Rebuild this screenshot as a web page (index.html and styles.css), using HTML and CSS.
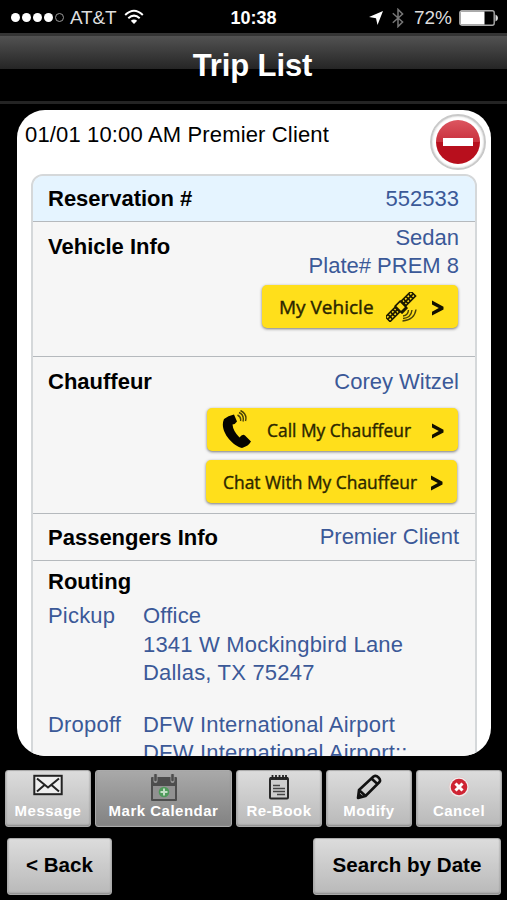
FILE: index.html
```html
<!DOCTYPE html>
<html lang="en">
	<head>
		<meta charset="UTF-8" />
		<meta name="viewport" content="width=device-width, initial-scale=1.0" />
		<title>Trip List</title>
		<link rel="stylesheet" href="styles.css">
	</head>
	<body>
		<div class="status">
			<div class="carrier">
				<span class="dot"></span><span class="dot"></span><span class="dot"></span><span class="dot"></span><span class="dot empty"></span>
				<span class="network">AT&amp;T</span>
				<svg class="wifi" width="20" height="16" viewBox="0 0 20 16">
					<path d="M1.2 6 Q10 -2.4 18.8 6" fill="none" stroke="#fff" stroke-width="2" />
					<path d="M4.3 9.3 Q10 4 15.7 9.3" fill="none" stroke="#fff" stroke-width="2" />
					<path d="M6.8 11.8 Q10 9 13.2 11.8 L10 15Z" fill="#fff" />
				</svg>
			</div>
			<div class="time">10:38</div>
			<div class="battery-info">
				<svg width="14" height="14" viewBox="0 0 14 14">
					<path d="M14 0 L8.5 14 L7 7.3 L0 6Z" fill="#fff" />
				</svg>
				<svg class="bluetooth" width="12" height="20" viewBox="0 0 12 20">
					<path d="M0.8 5.2 L10.6 14 L6 18.6 V1.4 L10.6 6 L0.8 14.8" fill="none" stroke="#777" stroke-width="1.5" />
				</svg>
				<span class="percent">72%</span>
				<svg width="39" height="16" viewBox="0 0 39 16">
					<rect x="0.8" y="0.8" width="34.4" height="14.4" rx="2" fill="none" stroke="#aaa" stroke-width="1.4" />
					<rect x="1.5" y="1.5" width="24" height="13" fill="#fff" />
					<path d="M36.500 4.500 Q39 5.500 39 8 Q39 10.500 36.500 11.500Z" fill="#ddd" />
				</svg>
			</div>
		</div>

		<h1 class="header">Trip List</h1>

		<div class="card">
			<div class="card-title">
				<span>01/01 10:00 AM Premier Client</span>
				<div class="remove"><div class="remove-disc"><div class="remove-bar"></div></div></div>
			</div>
			<div class="details">
				<div class="row reservation">
					<h2>Reservation #</h2>
					<p>552533</p>
				</div>
				<div class="row vehicle">
					<h2>Vehicle Info</h2>
					<div class="value">
						<p>Sedan</p>
						<p>Plate# PREM 8</p>
						<div class="btn btn-vehicle">
							<span>My Vehicle</span>
							<svg class="satellite" width="32" height="30" viewBox="0 0 32 30">
								<g transform="rotate(-45 14.5 14.5)" fill="none" stroke="#1b1800" stroke-width="1.6">
									<rect x="-3.500" y="11.200" width="13.500" height="6.600" />
									<path d="M0 11.500v6M3.500 11.500v6M7 11.500v6M-3 14.500h13M19 14.500h13" />
									<rect x="19" y="11.200" width="13.500" height="6.600" />
									<path d="M22 11.500v6M25.500 11.500v6M29 11.500v6" />
									<path d="M11 10.500h7v9h-7z M10 14.500h1M18 14.500h1" fill="#ffdf1b" />
									<path d="M10.500 19.500h8" stroke-width="3" />
								</g>
								<path d="M17 24 Q22 23.500 22.500 18 M17 26.500 Q25 26 26 18 M16.500 29 Q28.500 28 30 17.500" fill="none" stroke="#4a4208" stroke-width="1.400" />
							</svg>
							<svg class="chevron" width="13" height="16" viewBox="0 0 13 16"><path d="M1 0.500 L12.500 6.800 V9.400 L1 15.500 V11.700 L7.800 8.100 L1 4.500Z" /></svg>
						</div>
					</div>
				</div>
				<div class="row chauffeur">
					<h2>Chauffeur</h2>
					<div class="value">
						<p>Corey Witzel</p>
						<div class="btn btn-call">
							<svg class="phone" width="30" height="40" viewBox="0 0 30 40">
								<path d="M2 9 Q6 5.500 12 4.500 L15 11.500 Q13.500 14 10.500 14.500 Q11 21 17.500 27.500 Q20.500 23.500 23 25.500 L29 31.500 Q26.500 36 20 38 C9 35 -3 20 2 9Z" fill="#050500" />
								<path d="M15.500 5 Q19.500 7 18.500 11 M17 2.500 Q22.500 5 21 11.500 M18.500 0.500 Q25.500 4 23.500 11" fill="none" stroke="#4a4208" stroke-width="1.400" />
							</svg>
							<span class="narrow">Call My Chauffeur</span>
							<svg class="chevron" width="13" height="16" viewBox="0 0 13 16"><path d="M1 0.500 L12.500 6.800 V9.400 L1 15.500 V11.700 L7.800 8.100 L1 4.500Z" /></svg>
						</div>
						<div class="btn btn-chat">
							<span class="narrow">Chat With My Chauffeur</span>
							<svg class="chevron" width="13" height="16" viewBox="0 0 13 16"><path d="M1 0.500 L12.500 6.800 V9.400 L1 15.500 V11.700 L7.800 8.100 L1 4.500Z" /></svg>
						</div>
					</div>
				</div>
				<div class="row passengers">
					<h2>Passengers Info</h2>
					<p>Premier Client</p>
				</div>
				<div class="routing">
					<h2>Routing</h2>
					<div class="stop">
						<p>Pickup</p>
						<div>
							<p>Office</p>
							<p>1341 W Mockingbird Lane</p>
							<p>Dallas, TX 75247</p>
						</div>
					</div>
					<div class="stop">
						<p>Dropoff</p>
						<div>
							<p>DFW International Airport</p>
							<p>DFW International Airport::</p>
						</div>
					</div>
				</div>
			</div>
		</div>

		<div class="toolbar">
			<div class="tool">
				<svg width="30" height="22" viewBox="0 0 30 22">
					<rect x="1.300" y="1.800" width="27.400" height="18.400" fill="#eee" stroke="#222" stroke-width="2" />
					<path d="M4 4.500 L15 13.500 L26 4.500 M4 17.500 L11.500 11 M26 17.500 L18.500 11" fill="none" stroke="#222" stroke-width="2" />
				</svg>
				<span>Message</span>
			</div>
			<div class="tool wide">
				<svg width="28" height="28" viewBox="0 0 28 28">
					<rect x="1" y="3" width="26" height="24" rx="1" fill="#4d4d4d" />
					<rect x="3" y="12" width="22" height="13" fill="#919191" />
					<path d="M5.500 1v6M22.500 1v6" stroke="#999" stroke-width="4" stroke-linecap="round" />
					<path d="M5.500 1v5M22.500 1v5" stroke="#4d4d4d" stroke-width="2.500" stroke-linecap="round" />
					<circle cx="14" cy="18" r="5.300" fill="#4f9a5b" />
					<path d="M14 14.500v7M10.500 18h7" stroke="#c4dfc6" stroke-width="2" />
				</svg>
				<span>Mark Calendar</span>
			</div>
			<div class="tool">
				<svg width="22" height="26" viewBox="0 0 22 26">
					<rect x="2" y="4" width="18" height="20.500" rx="1" fill="#ccc" stroke="#282828" stroke-width="2" />
					<path d="M2 4.500h18" stroke="#282828" stroke-width="3" />
					<path d="M4.500 1v4M8 1v4M11.500 1v4M15 1v4M18 1v4" stroke="#222" stroke-width="1.800" />
					<path d="M5 11.500h7M5 14.500h12M5 17.500h12M9 20.500h8" stroke="#444" stroke-width="1.300" />
				</svg>
				<span>Re-Book</span>
			</div>
			<div class="tool">
				<svg width="26" height="26" viewBox="0 0 26 26">
					<path d="M3 16 L17.500 2.500 Q20 1 22.500 3.500 Q25 6 23.500 8 L9.500 22 L2 24Z M3.500 16.500 L9 21.500 M16 5 L21.500 10" fill="none" stroke="#111" stroke-width="2.600" stroke-linejoin="round" />
					<path d="M1.500 24.500 L3 18.500 L7.500 22.800Z" fill="#111" />
				</svg>
				<span>Modify</span>
			</div>
			<div class="tool">
				<svg class="cancel" width="22" height="22" viewBox="0 0 22 22">
					<circle cx="11" cy="11" r="10" fill="#eee" stroke="#ddc8c8" stroke-width="0.800" />
					<circle cx="11" cy="11" r="8.300" fill="#cf2433" />
					<path d="M7.500 7.500l7 7M14.500 7.500l-7 7" stroke="#fff" stroke-width="3" />
				</svg>
				<span>Cancel</span>
			</div>
		</div>

		<div class="bottom">
			<div class="nav-btn back">&lt; Back</div>
			<div class="nav-btn search">Search by Date</div>
		</div>
	</body>
</html>
```
FILE: styles.css
```css
* {
	box-sizing: border-box;
	margin: 0;
	padding: 0;
}

body {
	width: 507px;
	height: 900px;
	overflow: hidden;
	background: #000;
	font-family: "Liberation Sans", Arial, sans-serif;
	font-size: 22px;
	line-height: 28px;
}

svg {
	display: block;
	flex-shrink: 0;
}

h2 {
	font-size: 22px;
	line-height: 28px;
	white-space: nowrap;
}

/* status bar */
.status {
	display: grid;
	grid-template-columns: 1fr auto 1fr;
	align-items: center;
	height: 33px;
	padding: 2px 9px 0 11px;
	color: #ddd;
	font-size: 19px;
}

.carrier,
.battery-info {
	display: flex;
	align-items: center;
}

.battery-info {
	justify-content: flex-end;
}

.dot {
	width: 9px;
	height: 9px;
	margin-right: 2px;
	border-radius: 50%;
	background: #fff;
}

.dot.empty {
	background: none;
	border: 1px solid #999;
}

.network {
	margin-left: 4px;
	letter-spacing: -0.2px;
}

.wifi {
	margin: -2px 0 0 8px;
}

.time {
	margin-right: 2px;
	color: #fff;
	font-size: 18px;
	font-weight: bold;
}

.bluetooth {
	margin: 0 10px 0 9px;
}

.percent {
	margin-right: 7px;
}

/* title bar */
.header {
	height: 71px;
	padding-right: 2px;
	border-top: 3px solid #353535;
	border-bottom: 3px solid #242424;
	background: linear-gradient(#525252, #252525 33px, #000 33px);
	color: #fff;
	font-size: 31px;
	line-height: 59px;
	text-align: center;
	letter-spacing: -0.1px;
}

/* trip card */
.card {
	width: 474px;
	height: 646px;
	margin: 6px 0 0 17px;
	overflow: hidden;
	border-radius: 28px;
	background: #fff;
}

.card-title {
	display: flex;
	justify-content: space-between;
	height: 64px;
	padding: 5px 5px 0 8px;
	line-height: 39px;
	letter-spacing: 0.15px;
}

.remove {
	display: flex;
	align-items: center;
	justify-content: center;
	width: 56px;
	height: 56px;
	margin-top: -1px;
	border: 2px solid #c9c9c9;
	border-radius: 50%;
	background: #fff;
	box-shadow: inset 0 0 2px #bbb;
}

.remove-disc {
	display: flex;
	align-items: center;
	justify-content: center;
	width: 44px;
	height: 44px;
	border-radius: 50%;
	background: linear-gradient(#dc5660, #c9313d 49%, #b80f1d 50%);
}

.remove-bar {
	width: 30px;
	height: 8px;
	background: #fff;
}

.details {
	width: 446px;
	height: 620px;
	margin-left: 14px;
	overflow: hidden;
	border: 2px solid #d5d8da;
	border-radius: 12px;
	background: #f6f6f6;
	color: #3b5998;
}

.details h2 {
	color: #000;
}

.row {
	display: flex;
	justify-content: space-between;
	padding: 0 16px 0 15px;
	border-bottom: 1px solid #b5b9bd;
	text-align: right;
}

.reservation {
	height: 46px;
	padding-top: 9px;
	background: #e5f4ff;
}

.vehicle {
	height: 135px;
	padding-top: 2px;
}

.vehicle h2 {
	margin-top: 9px;
}

.chauffeur {
	height: 157px;
	padding-top: 11px;
}

.passengers {
	height: 47px;
	padding-top: 9px;
}

.passengers h2 {
	margin-top: 1px;
}

.value {
	display: flex;
	flex-direction: column;
	align-items: flex-end;
}

/* yellow buttons */
.btn {
	display: flex;
	align-items: center;
	height: 43px;
	padding-right: 14px;
	border-radius: 5px;
	background: #ffdf1b;
	box-shadow: 0 1px 3px #777;
	color: #2b2600;
	font-family: "Open Sans", "Noto Sans", sans-serif;
	font-size: 19px;
	white-space: nowrap;
	-webkit-text-stroke: 0.4px #2b2600;
}

.btn-vehicle {
	width: 196px;
	margin-top: 5px;
	margin-right: 1px;
	padding-left: 17px;
}

.btn-call {
	width: 251px;
	margin-top: 12px;
	margin-right: 1px;
	padding-left: 15px;
}

.btn-chat {
	width: 251px;
	margin-top: 9px;
	margin-right: 2px;
	padding-left: 17px;
}

.narrow {
	margin-right: -18px;
	transform: scaleX(0.916);
	transform-origin: left;
}

.chevron {
	margin: 3px 0 0 auto;
	fill: #111000;
}

.satellite {
	margin-left: 12px;
}

.phone {
	margin-right: 15px;
}

/* routing */
.routing {
	padding: 7px 15px;
}

.stop {
	display: grid;
	grid-template-columns: 95px 1fr;
	margin-top: 6px;
	line-height: 28.5px;
	letter-spacing: 0.2px;
	white-space: nowrap;
}

.stop + .stop {
	margin-top: 23px;
}

/* bottom buttons */
.toolbar {
	display: flex;
	gap: 4px;
	padding: 14px 5px 0;
}

.tool,
.nav-btn {
	border: 1px solid #aaa;
	border-radius: 3px;
	background: linear-gradient(#dcdcdc, #b9b9b9);
	box-shadow: inset 0 -1px 2px #888;
}

.tool {
	display: flex;
	flex-direction: column;
	align-items: center;
	justify-content: space-between;
	width: 86px;
	height: 57px;
	padding: 3px 0 4px;
	color: #fff;
	font-size: 15px;
	font-weight: bold;
	line-height: 22px;
	letter-spacing: 0.5px;
	white-space: nowrap;
}

.tool.wide {
	width: 137px;
	background: linear-gradient(#a9a9a9, #828282);
}

.tool svg {
	margin-bottom: -6px;
}

.tool .cancel {
	margin-top: 2px;
}

.bottom {
	display: flex;
	justify-content: space-between;
	padding: 11px 6px 0 7px;
}

.nav-btn {
	height: 57px;
	color: #000;
	font-size: 20.6px;
	font-weight: bold;
	line-height: 51px;
	text-align: center;
}

.back {
	width: 105px;
}

.search {
	width: 188px;
}
```
